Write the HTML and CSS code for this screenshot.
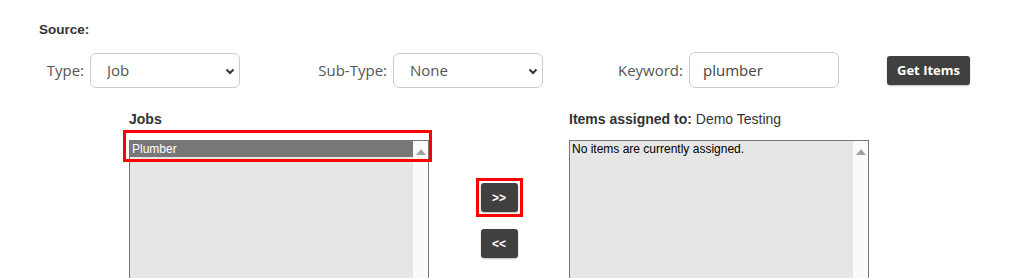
FILE: index.html
```html
<!DOCTYPE html>
<html>
<head>
  <meta charset="UTF-8">
  <title>Assign Items</title>
  <link rel="stylesheet" href="styles.css">
</head>
<body>
  <div class="page">
    <div class="source-title">Source:</div>

    <div class="filters">
      <div class="field field-type">
        <label>Type:</label>
        <div class="select-wrap">
          <select class="ctrl">
            <option>Job</option>
          </select>
          <svg class="chev" width="10" height="7" viewBox="0 0 10 7"><path d="M1.5 1.5 L5 5 L8.5 1.5" fill="none" stroke="#333" stroke-width="2"/></svg>
        </div>
      </div>
      <div class="field field-sub">
        <label>Sub-Type:</label>
        <div class="select-wrap">
          <select class="ctrl">
            <option>None</option>
          </select>
          <svg class="chev" width="10" height="7" viewBox="0 0 10 7"><path d="M1.5 1.5 L5 5 L8.5 1.5" fill="none" stroke="#333" stroke-width="2"/></svg>
        </div>
      </div>
      <div class="field field-key">
        <label>Keyword:</label>
        <input class="ctrl ctrl-text" type="text" value="plumber">
      </div>
      <button class="btn btn-get">Get Items</button>
    </div>

    <div class="assign">
      <div class="list-col">
        <div class="list-title">Jobs</div>
        <div class="listbox">
          <div class="list-items">
            <div class="item selected">Plumber</div>
          </div>
          <div class="scrollbar"><span class="arrow"></span></div>
          <div class="mark"></div>
        </div>
      </div>

      <div class="move-col">
        <span class="mark-btn"><button class="btn btn-move">&gt;&gt;</button></span>
        <button class="btn btn-move">&lt;&lt;</button>
      </div>

      <div class="list-col">
        <div class="list-title">Items assigned to: <span class="plain">Demo Testing</span></div>
        <div class="listbox">
          <div class="list-items">
            <div class="item">No items are currently assigned.</div>
          </div>
          <div class="scrollbar"><span class="arrow"></span></div>
        </div>
      </div>
    </div>
  </div>
</body>
</html>
```

FILE: styles.css
```css
body { margin: 0; background: #fff; font-family: "Open Sans", sans-serif; overflow: hidden; }
.page { padding: 21px 0 0 39px; }
.source-title { font-family: "Liberation Sans", Arial, sans-serif; font-weight: bold; font-size: 13.5px; line-height: 17px; color: #333; }

.filters { display: flex; align-items: center; margin-top: 14px; height: 36px; }
.field { display: flex; align-items: center; justify-content: flex-end; gap: 6px; }
.field label { font-size: 15px; color: #555; }
.field-type { width: 201px; }
.field-sub { width: 303px; }
.field-key { width: 296px; }

.select-wrap { position: relative; }
.ctrl { box-sizing: border-box; width: 150px; height: 35px; border: 1px solid #ccc; border-radius: 6px; background: #fff; font-family: "Open Sans", sans-serif; font-size: 15px; color: #555; padding: 0 0 0 16px; appearance: none; -webkit-appearance: none; outline: none; }
.ctrl-text { height: 36px; padding-left: 13px; color: #444; }
.chev { position: absolute; right: 5px; top: 15px; }

.btn { background: #404040; color: #fff; border: none; border-radius: 3px; cursor: pointer; box-shadow: 0 1px 2px rgba(0,0,0,0.25); }
.btn-get { margin-left: 48px; width: 83px; height: 29px; font-family: "Open Sans", sans-serif; font-weight: bold; font-size: 13px; padding: 0; }

.assign { display: flex; margin-top: 23px; padding-left: 90px; }
.list-col { width: 300px; }
.list-title { font-family: "Liberation Sans", Arial, sans-serif; font-weight: bold; font-size: 14px; line-height: 17px; color: #333; margin-bottom: 12px; }
.list-title .plain { font-weight: normal; }

.listbox { position: relative; display: flex; height: 200px; border: 1px solid #767676; background: #e6e6e6; }
.list-items { flex: 1; }
.item { font-family: "Liberation Sans", Arial, sans-serif; font-size: 12px; line-height: 16px; color: #000; padding-left: 2px; }
.item.selected { background: #777; color: #fff; }
.scrollbar { width: 15px; background: #fafafa; display: flex; justify-content: center; }
.arrow { margin-top: 8px; width: 0; height: 0; border-left: 5px solid transparent; border-right: 5px solid transparent; border-bottom: 6px solid #a3a3a3; }
.mark { position: absolute; left: -7px; top: -11px; width: 303px; height: 26px; border: 3px solid #f00; }

.move-col { width: 140px; display: flex; flex-direction: column; align-items: center; gap: 12px; padding-top: 67px; }
.mark-btn { display: flex; padding: 2px; border: 3px solid #f00; }
.btn-move { width: 37px; height: 29px; font-family: "Liberation Sans", Arial, sans-serif; font-weight: bold; font-size: 12px; padding: 0; }
```
